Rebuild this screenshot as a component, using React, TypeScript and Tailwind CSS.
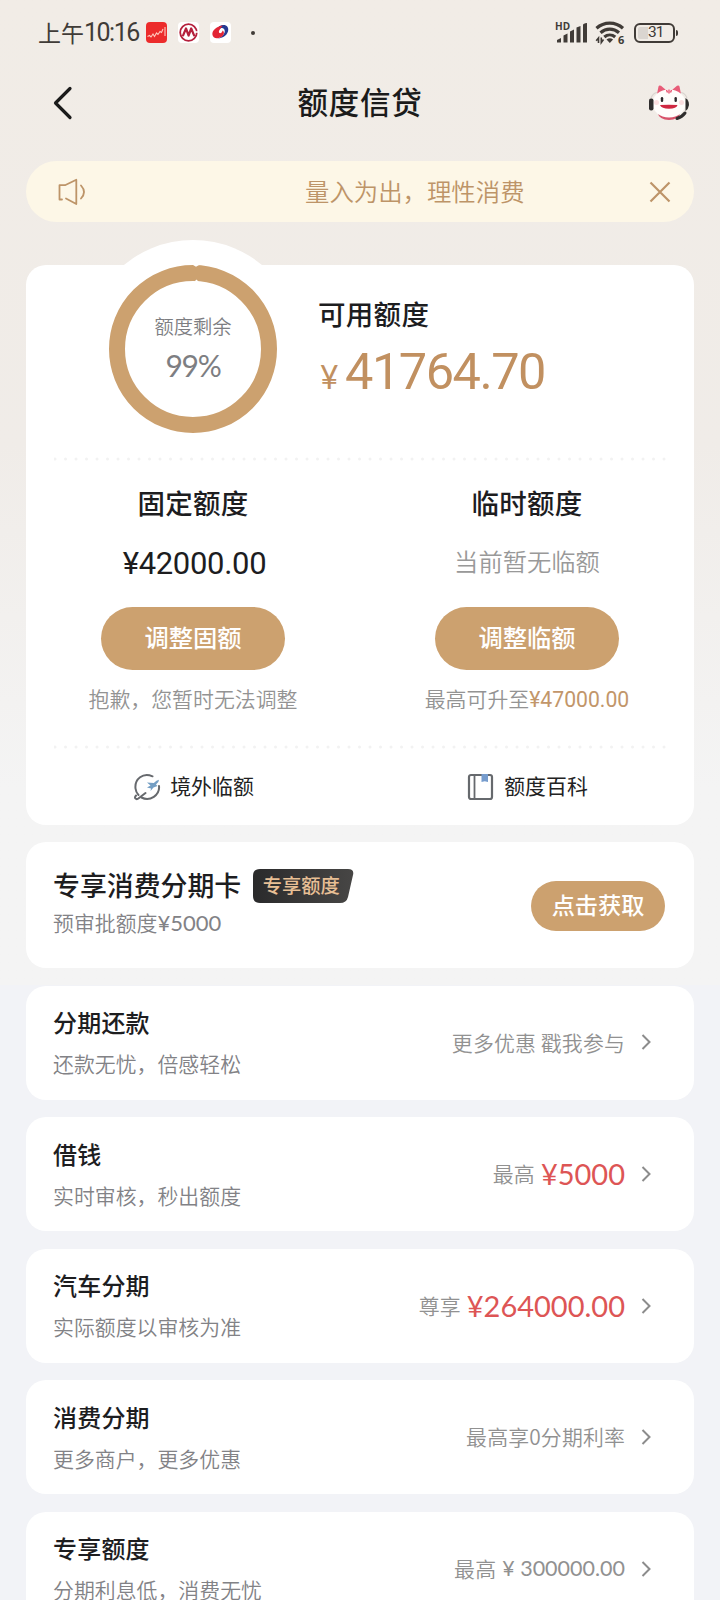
import React from 'react';

interface Producto {
    id: string;
    titulo: string;
    detalle: string;
    nota: string;
    monto?: string;
    gris?: boolean;
}

const PRODUCTOS: Producto[] = [
    { id: 'huankuan', titulo: '分期还款', detalle: '还款无忧，倍感轻松', nota: '更多优惠 戳我参与' },
    { id: 'jieqian', titulo: '借钱', detalle: '实时审核，秒出额度', nota: '最高', monto: '¥5000' },
    { id: 'qiche', titulo: '汽车分期', detalle: '实际额度以审核为准', nota: '尊享', monto: '¥264000.00' },
    { id: 'xiaofei', titulo: '消费分期', detalle: '更多商户，更多优惠', nota: '最高享0分期利率' },
    { id: 'zhuanxiang', titulo: '专享额度', detalle: '分期利息低，消费无忧', nota: '最高', monto: '¥ 300000.00', gris: true },
];

const StatusBar = () => (
    <div className="flex h-[65px] items-center pl-[38px] pr-[42px] text-[#403b37]">
        <div className="flex w-[108px] items-center whitespace-nowrap text-[23px] leading-[30px]">
            <span className="-mt-[2px]">上午</span>
            <span className="font-['Roboto'] text-[25px] tracking-[-1.500px]">10:16</span>
        </div>
        <svg width="21" height="21" viewBox="0 0 21 21">
            <rect width="21" height="21" rx="4" fill="#ec2b2b" />
            <path d="M1.500 14.500l2-1 1.500 1.500 2-3 1.500 2.500 2-3.500 1.500 1.500 2-3 1.500 1 1.500-3.500M19 5v9" fill="none" stroke="#ffc9bd" strokeWidth="1.100" />
        </svg>
        <svg className="ml-[11px]" width="21" height="21" viewBox="0 0 21 21">
            <rect width="21" height="21" rx="4" fill="#fff" />
            <circle cx="10.500" cy="10.500" r="8.300" fill="none" stroke="#b5203c" strokeWidth="1.800" />
            <path d="M4.800 14.200L8 6.500l2.600 7 2.600-7 3.200 7.700" fill="none" stroke="#b5203c" strokeWidth="2.200" strokeLinejoin="round" />
            <path d="M17 10h4" stroke="#fff" strokeWidth="1.600" />
        </svg>
        <svg className="ml-[11px]" width="21" height="21" viewBox="0 0 21 21">
            <rect width="21" height="21" rx="4" fill="#fff" />
            <path d="M9 4.500C14.500 1 19.500 4 18 9.500 16.500 14 12.500 16 8 16.500 14 14 16 9.500 14 7 12.500 5.300 10.500 6 9 7.500z" fill="#263a92" />
            <path d="M13 3.500C6 4.500 2 8.500 2.400 12.500 2.800 16.500 7.500 17.500 12 14.500 14.500 12.500 14.500 9.500 12.500 8.500 12.500 10.500 10.500 11.500 9.500 11 8 10 9.500 7 13 3.500z" fill="#e22435" />
        </svg>
        <span className="ml-[20px] size-1 rounded-full bg-[#403b37]" />
        <div className="ml-auto flex items-center">
            <svg width="34" height="26" viewBox="0 0 34 26" fill="#403b37">
                <text x="0" y="10" fontFamily="Open Sans" fontSize="10" fontWeight="700">HD</text>
                <path d="M2 22.500v-2.500l4-2v4.500zM8.500 22.500v-7l4-2v9zM15 22.500v-11l4-2v13zM21.500 22.500v-15l4-1.500v16.500zM28 22.500v-17.500q0-1.500 4-2v19.500z" />
            </svg>
            <svg className="ml-[6px]" width="34" height="30" viewBox="0 -2 34 30">
                <path d="M1.500 8.200C9 1.400 20.500 1.400 28 8.200M5.500 12.800C11 8 18.500 8 24 12.800M9.300 17C12.500 14.300 17 14.300 20.200 17" fill="none" stroke="#403b37" strokeWidth="3.200" />
                <path d="M11.500 19.500q3.300-2.600 6.600 0L14.800 23z" fill="#403b37" />
                <path d="M3.500 23v-5L1.200 20.800M6.300 17.500v5l2.200-3" fill="none" stroke="#403b37" strokeWidth="1.600" />
                <text x="23" y="23.500" fontFamily="Open Sans" fontSize="11" fontWeight="700" fill="#403b37">6</text>
            </svg>
            <div className="ml-[5px] flex h-[20px] w-[41px] items-center rounded-[6px] border-2 border-[#403b37] p-[2px]">
                <div className="h-full w-[10px] rounded-l-[2px] bg-[#dad5d0]" />
                <span className="pt-px font-['Roboto'] text-[15.500px] leading-none tracking-[-1px]">31</span>
            </div>
            <div className="ml-[1px] h-[6px] w-[2px] rounded-r-sm bg-[#403b37]" />
        </div>
    </div>
);

const Mascota = () => (
    <svg width="42" height="36" viewBox="0 0 42 36">
        <path d="M9 9L10.500 1.500Q11 0 13 .8L18 5zM24 5L29 .8Q31 0 31.500 1.500L33 9z" fill="#e85c78" />
        <path d="M3 13Q5 8 9 7.500M39 13Q37 8 33 7.500" fill="none" stroke="#d8d3cf" strokeWidth="1.200" />
        <ellipse cx="21" cy="28" rx="11" ry="7" fill="#d8526a" />
        <ellipse cx="21" cy="18.500" rx="16.500" ry="14" fill="#fffdfb" />
        <path d="M18.500 5l1 2.500M21 4.500v4M23.500 5l-1 2.500" stroke="#e8506e" strokeWidth="1.400" />
        <circle cx="8.500" cy="17.500" r="2.500" fill="#fbdfe0" />
        <circle cx="33.500" cy="17.500" r="2.500" fill="#fbdfe0" />
        <rect x="12.800" y="12" width="2.400" height="5" rx="1.200" fill="#2c292b" />
        <rect x="26.500" y="12" width="2.400" height="5" rx="1.200" fill="#2c292b" />
        <path d="M12 20q9-.6 17.500 0Q28.500 23.800 21 23.800T12 20z" fill="#cf2740" />
        <rect x="1" y="13.500" width="4.500" height="12" rx="2" fill="#2f2d2d" />
        <path d="M37.500 13q3.500 2 3.500 7-.5 4-3.500 6z" fill="#2f2d2d" />
        <path d="M37 28Q34 32 29 33.500" fill="none" stroke="#2f2d2d" strokeWidth="3" strokeLinecap="round" />
    </svg>
);

const LineaPuntos = () => (
    <svg className="mx-auto block" width="612" height="4" viewBox="0 0 612 4">
        <path d="M1 2H612" stroke="#f2f2f2" strokeWidth="3" strokeLinecap="round" strokeDasharray="0.01 10.49" />
    </svg>
);

const Flecha = () => (
    <svg width="10" height="18" viewBox="0 0 10 18">
        <path d="M1.500 2L8.500 9l-7 7" fill="none" stroke="#8c8c8c" strokeWidth="2" />
    </svg>
);

const FilaProducto: React.FC<{ producto: Producto }> = ({ producto }) => (
    <div className="flex h-[114px] shrink-0 items-center justify-between rounded-[20px] bg-white pl-[27px] pr-[43px]">
        <div className="flex flex-col gap-[5px]">
            <h3 className="text-[24px] font-medium leading-[36px] tracking-[0.200px] text-[#1d1d1f]">{producto.titulo}</h3>
            <p className="text-[20.900px] font-[350] leading-[36px] text-[#828286]">{producto.detalle}</p>
        </div>
        <div className="flex items-center text-[20.900px] font-[350] text-[#919191]">
            <span className="tracking-[0.150px]">{producto.nota}</span>
            {producto.monto && (
                <span className={producto.gris ? "ml-[6px] font-['Lato'] text-[21.500px] font-normal" : "ml-[6px] font-['Lato'] text-[29px] font-normal leading-9 text-[#dd5555]"}>
                    {producto.monto}
                </span>
            )}
            <span className="ml-[16px]"><Flecha /></span>
        </div>
    </div>
);

export default function App() {
    return (
        <div className="h-[1600px] w-[720px] overflow-hidden bg-[#f2f3f7] font-['Noto_Sans_CJK_SC',sans-serif]">
            <div className="h-[985px] bg-linear-to-b from-[#f1ece6] from-0% via-[#f0ece8] via-45% to-[#f4f4f4] to-80%">
                <StatusBar />

                <header className="flex h-[76px] items-center justify-between pl-[52px] pr-[30px]">
                    <svg width="42" height="34" viewBox="0 0 42 34">
                        <path d="M18 2.500L3.500 17 18 31.500" fill="none" stroke="#1b1b1b" strokeWidth="3.200" strokeLinecap="round" strokeLinejoin="round" />
                    </svg>
                    <h1 className="pb-[2px] pr-[22px] text-[30.500px] font-medium tracking-[0.700px] text-[#1b1b1b]">额度信贷</h1>
                    <Mascota />
                </header>

                <main className="px-[26px] pt-[20px]">
                    <div className="flex h-[61px] items-center rounded-full bg-[#fdf7e7] pl-[31px] pr-[22px] text-[#bd9468]">
                        <svg width="30" height="30" viewBox="0 0 30 30" fill="none" stroke="currentColor" strokeWidth="1.800" strokeLinecap="round" strokeLinejoin="round">
                            <path d="M5 22.500H2.500V8.200H8L19.300 2.800V27L9 21.500" />
                            <path d="M24 8.500Q30 15 24 21.500" />
                        </svg>
                        <p className="ml-[218px] text-[24.400px] font-[350]">量入为出，理性消费</p>
                        <svg className="ml-auto" width="24" height="24" viewBox="0 0 24 24">
                            <path d="M2.500 2.500l19 19M21.500 2.500l-19 19" stroke="currentColor" strokeWidth="2.200" />
                        </svg>
                    </div>

                    <section className="relative mt-[42.500px] h-[560px] rounded-[20px] bg-white">
                        {/* white bump behind the ring, rises above the card edge */}
                        <div className="absolute left-[59px] top-[-24.500px] size-[216px] rounded-full bg-white" />
                        <div className="relative flex h-[192px]">
                            <div className="relative ml-[83px] size-[168px]">
                                <svg width="168" height="168" viewBox="0 0 168 168">
                                    <circle cx="84" cy="84" r="76" fill="none" stroke="#cca16f" strokeWidth="16" />
                                    <path d="M84 0L87 1.800 90 0zM85 17L87.500 14.500 90 17z" fill="#fff" />
                                </svg>
                                <div className="absolute inset-0 flex flex-col items-center pt-[47px] text-[#7d7e82]">
                                    <span className="text-[19.300px] font-[350] leading-[28px]">额度剩余</span>
                                    <span className="mt-[7px] font-['Lato'] text-[30px] leading-[36px] tracking-[-1.200px]">99%</span>
                                </div>
                            </div>
                            <div className="pl-[41px] pt-[28px]">
                                <h2 className="text-[27.500px] font-medium leading-[40px] tracking-[0.300px] text-[#1d1d1f]">可用额度</h2>
                                <p className="mt-[9px] flex items-baseline font-['Roboto'] leading-[60px] text-[#c19060]">
                                    <span className="w-[27px] pl-[2px] font-['Lato'] text-[32px]">¥</span>
                                    <span className="text-[50.500px] font-[450] tracking-[-1.500px]">41764.70</span>
                                </p>
                            </div>
                        </div>
                        <LineaPuntos />

                        <div className="flex h-[284px] text-center">
                            <div className="flex w-1/2 flex-col items-center pt-[21px]">
                                <h2 className="text-[27.500px] font-medium leading-[40px] tracking-[0.200px] text-[#1d1d1f]">固定额度</h2>
                                <p className="mt-[22px] pl-[3px] font-['Roboto'] text-[31px] leading-[40px] tracking-[-0.300px] text-[#1d1d1f]">¥42000.00</p>
                                <button className="mt-[23px] h-[63px] w-[184px] rounded-full bg-[#cca16f] pb-px text-[24.300px] font-medium text-white">调整固额</button>
                                <p className="mt-[12.500px] text-[20.900px] font-[350] leading-[32px] text-[#939393]">抱歉，您暂时无法调整</p>
                            </div>
                            <div className="flex w-1/2 flex-col items-center pt-[21px]">
                                <h2 className="text-[27.500px] font-medium leading-[40px] tracking-[0.200px] text-[#1d1d1f]">临时额度</h2>
                                <p className="mt-[19px] text-[24.300px] font-[350] leading-[40px] text-[#999999]">当前暂无临额</p>
                                <button className="mt-[26px] h-[63px] w-[184px] rounded-full bg-[#cca16f] pb-px text-[24.300px] font-medium text-white">调整临额</button>
                                <p className="mt-[12.500px] text-[20.900px] font-[350] leading-[32px] text-[#939393]">
                                    最高可升至<span className="font-['Roboto'] text-[21.200px] font-normal text-[#c2966a]">¥47000.00</span>
                                </p>
                            </div>
                        </div>
                        <LineaPuntos />

                        <div className="flex h-[76px] text-[20.900px] text-[#222222]">
                            <div className="flex w-1/2 items-center justify-center gap-[9px] pl-px">
                                <svg width="28" height="28" viewBox="0 0 28 28" fill="none" strokeLinecap="round">
                                    <path d="M19.500 3.300C10 -1 1.500 6 2.500 15.500 2.800 18 4 20.500 5.500 22M26 13C27 22 17 29 8.500 24.500" stroke="#66696d" strokeWidth="2" />
                                    <path d="M12.500 20L6 25C3 27.500 .8 25 3 22.500" stroke="#66696d" strokeWidth="2" />
                                    <path d="M26 6.800Q23.500 7 20.800 10L14 9.500 17.500 12.500 14 14.500 18 15.500 17.500 18 20.500 14.500 24.500 13 23 11.500Q26 9.500 26 6.800z" fill="#739ec4" />
                                </svg>
                                <span className="-mt-[2px]">境外临额</span>
                            </div>
                            <div className="flex w-1/2 items-center justify-center gap-[10px] pl-px">
                                <svg width="27" height="28" viewBox="0 0 27 28">
                                    <rect x="2" y="2" width="23" height="24" rx="2" fill="none" stroke="#66696d" strokeWidth="2.200" />
                                    <path d="M7.500 2v24" stroke="#66696d" strokeWidth="1.800" />
                                    <path d="M14.500 1H21v8l-3.200-.8L14.500 9z" fill="#769ccd" />
                                </svg>
                                <span className="-mt-[2px]">额度百科</span>
                            </div>
                        </div>
                    </section>

                    <section className="mt-[17.500px] flex h-[126px] items-center justify-between rounded-[20px] bg-white pl-[27px] pr-[29px]">
                        <div>
                            <div className="-mt-px flex items-center">
                                <h2 className="-mt-px text-[26.900px] font-medium leading-[38px] text-[#1d1d1f]">专享消费分期卡</h2>
                                <div className="relative ml-[12px] flex h-[34px] w-[101px] items-center justify-center">
                                    <svg className="absolute inset-0" width="101" height="34" viewBox="0 0 101 34">
                                        <defs>
                                            <linearGradient id="fondo" x1="0" x2="1">
                                                <stop offset="0" stopColor="#2a2a2b" />
                                                <stop offset="1" stopColor="#474645" />
                                            </linearGradient>
                                        </defs>
                                        <path d="M7 0H95Q101.500 0 100 6L95 28Q93.500 34 87 34H7Q0 34 0 27V7Q0 0 7 0z" fill="url(#fondo)" />
                                    </svg>
                                    <span className="relative pb-[2px] pr-[5px] text-[19.300px] font-medium leading-[30px] text-[#e8bf95]">专享额度</span>
                                </div>
                            </div>
                            <p className="pb-px text-[20.900px] font-[350] leading-[37px] text-[#828286]">
                                预审批额度<span className="font-['Lato'] text-[22px] font-normal">¥5000</span>
                            </p>
                        </div>
                        <button className="mt-px h-[50px] w-[134px] rounded-full bg-[#cca16f] pb-px text-[23.200px] font-medium leading-none text-white">点击获取</button>
                    </section>

                    <div className="mt-[17.500px] flex flex-col gap-[17.500px]">
                        {PRODUCTOS.map(p => (
                            <FilaProducto key={p.id} producto={p} />
                        ))}
                    </div>
                </main>
            </div>
        </div>
    );
}
